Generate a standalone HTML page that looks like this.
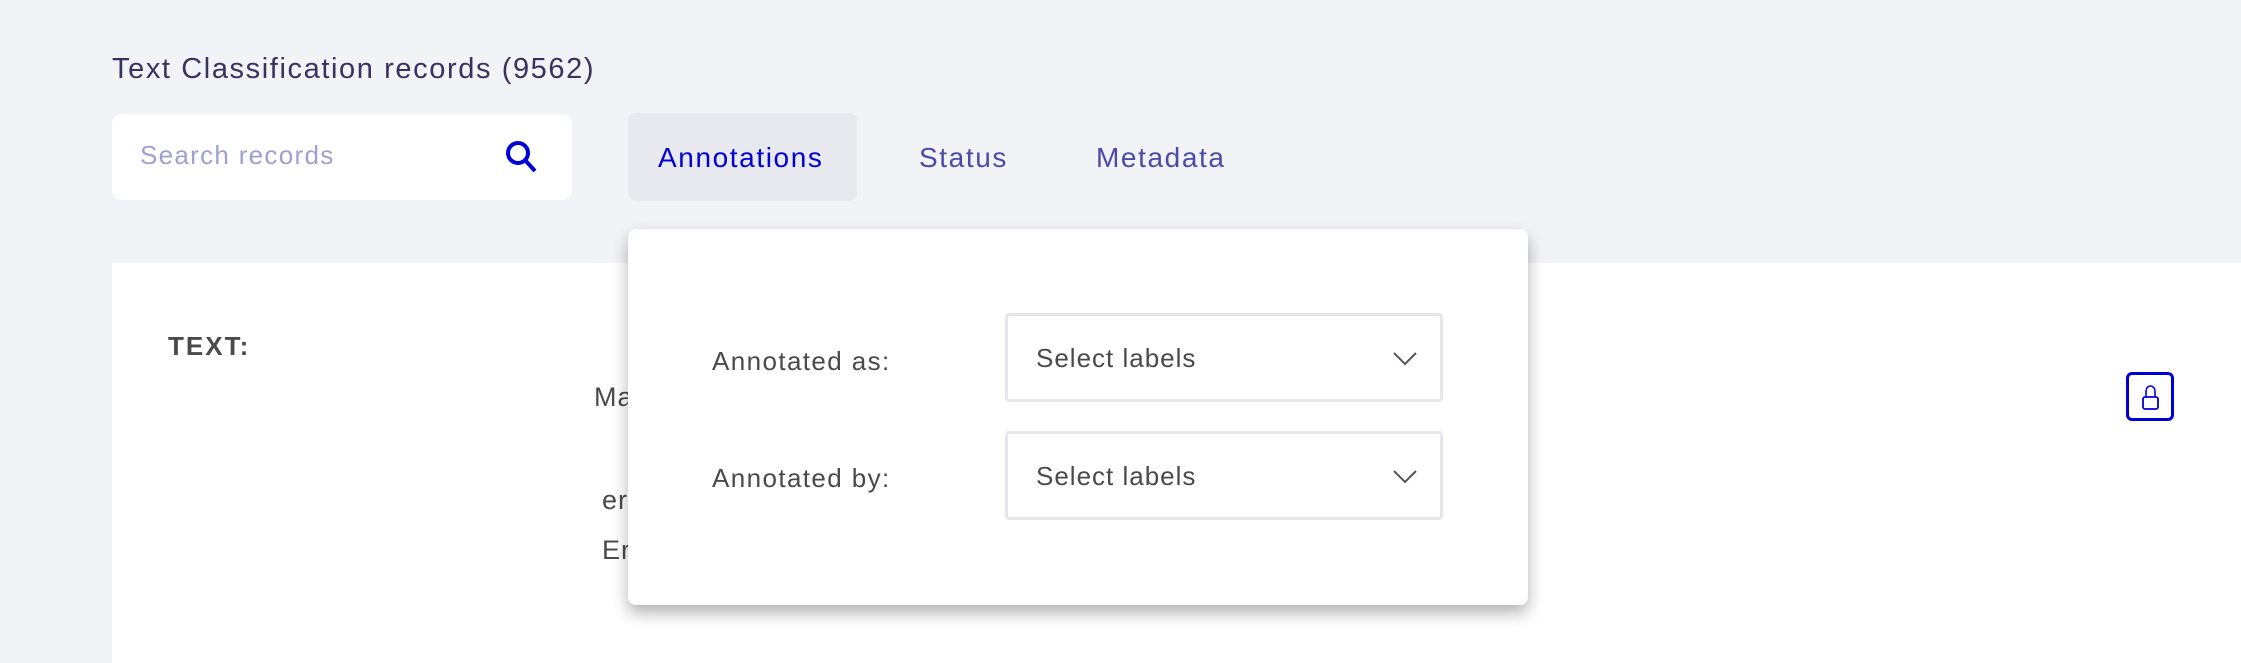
<!DOCTYPE html>
<html><head><meta charset="utf-8"><style>
*{margin:0;padding:0;box-sizing:border-box}
body{width:2241px;height:637px;overflow:hidden;background:#f2f3f7;font-family:"Liberation Sans",sans-serif;position:relative}
.abs{position:absolute}
.title{left:112px;top:53px;font-size:29px;letter-spacing:1.6px;color:#35345f}
.search{left:112px;top:114px;width:460px;height:86px;background:#fff;border-radius:10px}
.ph{left:28px;top:26px;font-size:26px;letter-spacing:1.3px;color:#9ea0d2}
.tab{top:114px;height:88px;line-height:88px;font-size:28px;letter-spacing:1.6px;color:#4b4aa6}
.card{left:112px;top:263px;width:2129px;height:400px;background:#fff}
.pop{left:628px;top:229px;width:900px;height:376px;background:#fff;border-radius:8px;box-shadow:0 8px 16px rgba(0,0,0,.3)}
.lbl{font-size:26px;letter-spacing:1.4px;color:#4a4a4a}
.sel{left:377px;width:438px;height:89px;border:3px solid #e6e7ec;border-radius:4px;background:#fff}
.sel span{position:absolute;left:28px;top:27px;font-size:26px;letter-spacing:1px;color:#4a4a4a}
.body{font-size:27px;letter-spacing:1px;color:#4a4a4a}
</style></head><body>
<div class="abs title">Text Classification records (9562)</div>
<div class="abs search"><div class="abs ph">Search records</div>
<svg class="abs" style="left:390px;top:24px" width="40" height="40" viewBox="0 0 40 40"><circle cx="16" cy="15" r="10" fill="none" stroke="#0000d6" stroke-width="4"/><line x1="23" y1="22" x2="33" y2="33" stroke="#0000d6" stroke-width="4"/></svg></div>
<div class="abs" style="left:628px;top:113px;width:229px;height:88px;background:#e8e9ee;border-radius:8px"></div>
<div class="abs tab" style="left:658px;color:#0000d6">Annotations</div>
<div class="abs tab" style="left:919px">Status</div>
<div class="abs tab" style="left:1096px">Metadata</div>
<div class="abs card"></div>
<div class="abs" style="left:168px;top:331px;font-size:26px;letter-spacing:2px;font-weight:bold;color:#4a4a4a">TEXT:</div>
<div class="abs body" style="left:594px;top:382px">Ma</div>
<div class="abs body" style="left:602px;top:485px">er</div>
<div class="abs body" style="left:602px;top:535px">Er</div>
<div class="abs" style="left:2126px;top:372px;width:48px;height:49px;border:3px solid #0000d6;border-radius:6px">
<svg class="abs" style="left:10px;top:8px" width="24" height="30" viewBox="0 0 24 30"><path d="M7 14V8a4.5 5 0 0 1 9 0v6" fill="none" stroke="#0000d6" stroke-width="1.6"/><rect x="4" y="14" width="15" height="12" rx="2" fill="none" stroke="#0000d6" stroke-width="1.8"/></svg></div>
<div class="abs pop">
<div class="abs lbl" style="left:84px;top:117px">Annotated as:</div>
<div class="abs lbl" style="left:84px;top:234px">Annotated by:</div>
<div class="abs sel" style="top:84px"><span>Select labels</span><svg class="abs" style="left:385px;top:36px" width="24" height="14" viewBox="0 0 24 14"><path d="M1 1l11 11L23 1" fill="none" stroke="#555" stroke-width="2"/></svg></div>
<div class="abs sel" style="top:202px"><span>Select labels</span><svg class="abs" style="left:385px;top:36px" width="24" height="14" viewBox="0 0 24 14"><path d="M1 1l11 11L23 1" fill="none" stroke="#555" stroke-width="2"/></svg></div>
</div>
</body></html>
